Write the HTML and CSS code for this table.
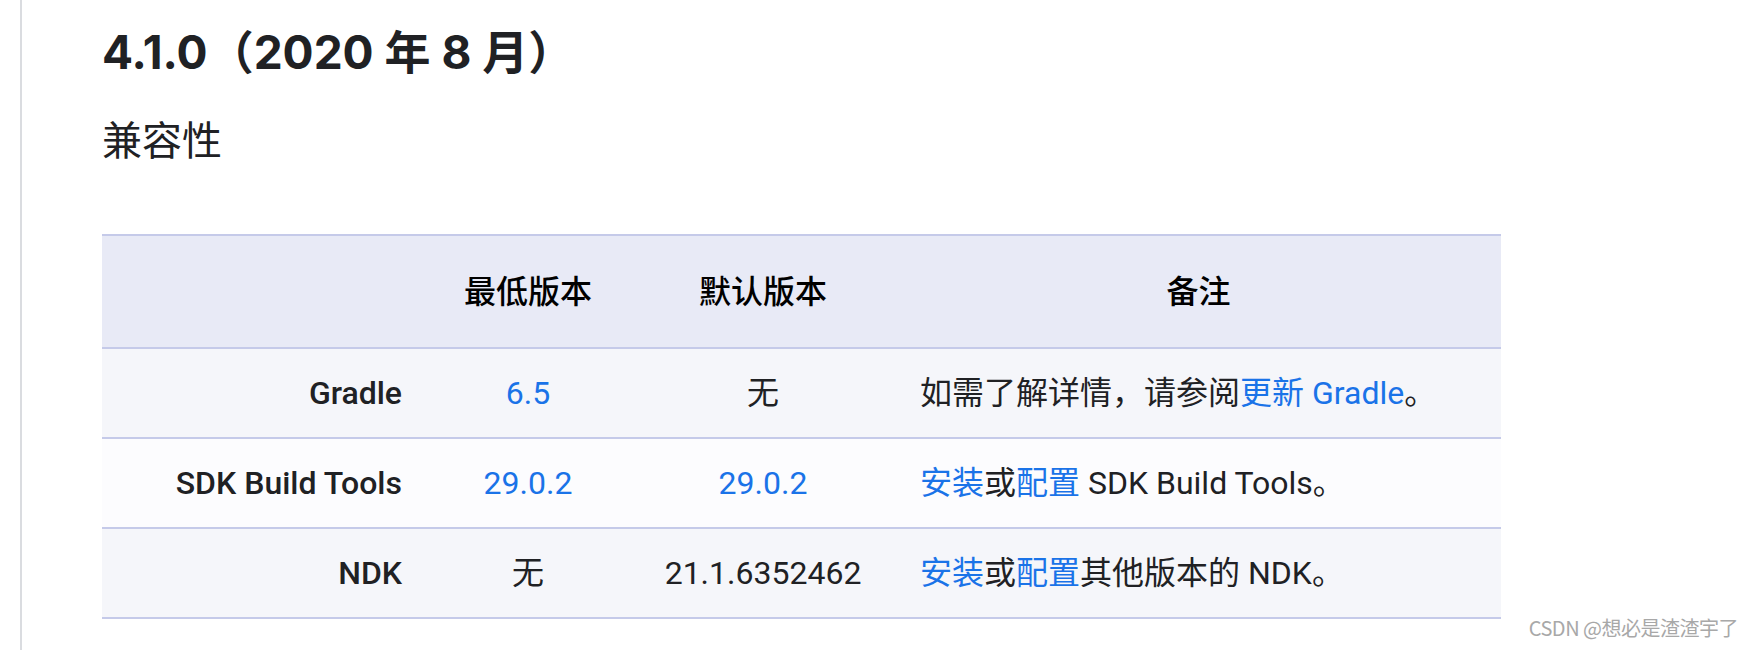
FILE: index.html
```html
<!DOCTYPE html>
<html lang="zh-CN">
<head>
<meta charset="utf-8">
<title>4.1.0（2020 年 8 月）</title>
<link rel="stylesheet" href="styles.css">
</head>
<body>
<div class="page">
  <div class="rail"></div>
  <main class="content">
    <h3 class="version">4.1.0（2020 年 8 月）</h3>
    <h4 class="section">兼容性</h4>
    <table class="compat">
      <colgroup>
        <col class="c1"><col class="c2"><col class="c3"><col class="c4">
      </colgroup>
      <thead>
        <tr>
          <th></th>
          <th>最低版本</th>
          <th>默认版本</th>
          <th>备注</th>
        </tr>
      </thead>
      <tbody>
        <tr>
          <th class="label">Gradle</th>
          <td class="mid"><a href="#">6.5</a></td>
          <td class="mid">无</td>
          <td class="note">如需了解详情，请参阅<a href="#">更新 Gradle</a>。</td>
        </tr>
        <tr>
          <th class="label">SDK Build Tools</th>
          <td class="mid"><a href="#">29.0.2</a></td>
          <td class="mid"><a href="#">29.0.2</a></td>
          <td class="note"><a href="#">安装</a>或<a href="#">配置</a> SDK Build Tools。</td>
        </tr>
        <tr>
          <th class="label">NDK</th>
          <td class="mid">无</td>
          <td class="mid">21.1.6352462</td>
          <td class="note"><a href="#">安装</a>或<a href="#">配置</a>其他版本的 NDK。</td>
        </tr>
      </tbody>
    </table>
  </main>
</div>
<div class="watermark">CSDN @想必是渣渣宇了</div>
</body>
</html>
```

FILE: styles.css
```css
html, body {
  margin: 0;
  padding: 0;
  background: #ffffff;
}

body {
  font-family: Roboto, "Noto Sans CJK SC", sans-serif;
  color: #202124;
  width: 1750px;
  height: 650px;
  overflow: hidden;
  position: relative;
}

.page {
  display: flex;
  height: 650px;
}

.rail {
  width: 20px;
  flex: 0 0 20px;
  border-right: 2px solid #dadce0;
}

.content {
  padding-left: 80px;
  flex: 1;
}

.version {
  font-family: Inter, "Noto Sans CJK SC", sans-serif;
  font-weight: 700;
  font-size: 46px;
  line-height: 56px;
  margin: 24px 0 0 0;
  color: #202124;
  letter-spacing: 0;
}

.section {
  font-family: "Noto Sans CJK SC", sans-serif;
  font-weight: 400;
  font-size: 40px;
  line-height: 48px;
  margin: 34px 0 0 0;
  color: #202124;
}

.compat {
  margin-top: 72px;
  border-collapse: collapse;
  table-layout: fixed;
  width: 1399px;
  font-size: 32px;
  line-height: 48px;
  border-top: 2px solid #c5cae9;
}

.c1 { width: 324px; }
.c2 { width: 204px; }
.c3 { width: 266px; }
.c4 { width: 605px; }

.compat thead tr {
  background: #e8eaf6;
}

.compat thead th {
  font-weight: 500;
  color: #000000;
  text-align: center;
  padding: 32px 24px 31px;
  border-bottom: 2px solid #c5cae9;
}

.compat tbody tr {
  background: #f5f6fa;
  border-bottom: 2px solid #c5cae9;
}

.compat tbody tr:nth-child(2) {
  background: #fcfcfe;
}

.compat tbody th,
.compat tbody td {
  padding: 20px 24px;
  white-space: nowrap;
}

.compat .label {
  text-align: right;
  font-weight: 500;
  color: #202124;
}

.compat .mid {
  text-align: center;
}

.compat .note {
  text-align: left;
}

.compat a {
  color: #1a73e8;
  text-decoration: none;
}

.watermark {
  position: absolute;
  right: 12px;
  bottom: 8px;
  font-family: "Noto Sans CJK SC", sans-serif;
  font-size: 20px;
  line-height: 28px;
  color: #a8a8a8;
  letter-spacing: -0.5px;
}
```
